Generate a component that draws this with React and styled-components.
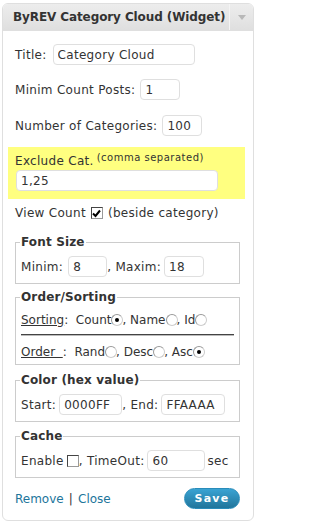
import React from "react";
import styled, { createGlobalStyle } from "styled-components";

const GlobalStyle = createGlobalStyle`
  body {
    margin: 0;
    background: #fff;
    font-family: "DejaVu Sans", Verdana, sans-serif;
    font-size: 12px;
    letter-spacing: 0.3px;
    color: #333;
  }
`;

const Widget = styled.div`
  box-sizing: border-box;
  width: 252px;
  margin: 3px 0 0 2px;
  border: 1px solid #dfdfdf;
  border-radius: 6px;
  overflow: hidden;
  background: #fff;
`;

const Header = styled.div`
  display: flex;
  height: 26px;
  border-bottom: 1px solid #dfdfdf;
  background: linear-gradient(to bottom, #ededed, #dfdfdf);
`;

const HeaderTitle = styled.h4`
  flex: 1;
  margin: 0;
  padding-left: 10px;
  font: bold 12px/26px "DejaVu Sans", Verdana, sans-serif;
  letter-spacing: -0.1px;
  color: #333;
  white-space: nowrap;
`;

const Toggle = styled.div`
  width: 23px;
  display: flex;
  align-items: center;
  justify-content: center;
  border-left: 1px solid #f4f4f4;
`;

const Body = styled.div`
  display: flex;
  flex-direction: column;
  padding: 13px 13px 11px 12px;
`;

const Row = styled.div`
  display: flex;
  align-items: center;
  height: ${(p) => p.$h || 21}px;
  margin-top: ${(p) => p.$mt || 0}px;
  letter-spacing: ${(p) => p.$ls ?? 0.3}px;
  white-space: pre;
`;

const TextInput = styled.input`
  box-sizing: border-box;
  width: ${(p) => p.$w}px;
  height: 21px;
  margin: 0 ${(p) => p.$mr ?? 0}px 0 ${(p) => p.$ml ?? 5}px;
  padding: 0 4px;
  border: 1px solid #dfdfdf;
  border-radius: 4px;
  background: #fff;
  font: 12px "DejaVu Sans", Verdana, sans-serif;
  letter-spacing: 0.3px;
  color: #333;
  outline: none;
`;

const Highlight = styled.div`
  margin: 11px -5px 0 -7px;
  padding: 6px 8px 8px 7px;
  background: #ffff80;
`;

const HighlightLabel = styled.div`
  height: 16px;
  margin-bottom: 1px;
  line-height: 16px;
  white-space: nowrap;
`;

const Note = styled.sup`
  margin-left: 3px;
  font-size: 10px;
  letter-spacing: 0.5px;
  vertical-align: 4px;
  line-height: 0;
`;

const Box = styled.span`
  box-sizing: border-box;
  display: inline-flex;
  align-items: center;
  justify-content: center;
  width: 12px;
  height: 12px;
  margin: 0 ${(p) => p.$mr ?? 1}px 0 ${(p) => p.$ml ?? 1}px;
  border: 1px solid #444;
  border-right-color: #999;
  border-bottom-color: #999;
  background: #fff;
`;

const Group = styled.fieldset`
  margin: ${(p) => p.$mt ?? 6}px 0 0;
  padding: 0 5px ${(p) => p.$pb ?? 6}px;
  border: 1px solid #ccc;
  min-inline-size: auto;
`;

const Legend = styled.legend`
  margin-left: -1px;
  padding: 0 1px;
  font: bold 12px/14px "DejaVu Sans", Verdana, sans-serif;
  letter-spacing: 0.15px;
  color: #333;
`;

const Under = styled.span`
  text-decoration: underline;
`;

const Radio = styled.span`
  box-sizing: border-box;
  display: inline-flex;
  align-items: center;
  justify-content: center;
  width: 12px;
  height: 12px;
  margin: 0 -1px 0 0;
  border-radius: 50%;
  border: 1px solid #999;
  border-right-color: #ccc;
  border-bottom-color: #ccc;
  background: #fff;

  &::after {
    content: "";
    display: ${(p) => (p.$checked ? "block" : "none")};
    width: 4px;
    height: 4px;
    border-radius: 50%;
    background: #000;
  }
`;

const Divider = styled.hr`
  margin: 4px 0 6px;
  height: 0;
  border: 0;
  border-top: 1px solid #444;
  border-bottom: 1px solid #bbb;
`;

const Footer = styled.div`
  display: flex;
  align-items: center;
  height: 21px;
  margin-top: 10px;
`;

const Link = styled.a`
  color: #21759b;
  letter-spacing: 0;
  text-decoration: none;
`;

const Pipe = styled.span`
  margin: 0 5px;
  color: #333;
`;

const SaveButton = styled.button`
  margin-left: auto;
  width: 56px;
  height: 21px;
  padding: 0;
  border: 1px solid #298cba;
  border-radius: 11px;
  background: linear-gradient(to bottom, #3aa3d3, #21759b);
  color: #fff;
  font: bold 11px "DejaVu Sans", Verdana, sans-serif;
  letter-spacing: 1.2px;
`;

const Arrow = () => (
  <svg width="8" height="5" viewBox="0 0 8 5">
    <path d="M0 0h8L4 5z" fill="#b8b8b8" />
  </svg>
);

const Check = () => (
  <svg width="9" height="9" viewBox="0 0 9 9">
    <path d="M1 4.5l2.5 2.5L8 1.5" stroke="#000" strokeWidth="2" fill="none" />
  </svg>
);

export default function App() {
  return (
    <>
      <GlobalStyle />
      <Widget>
        <Header>
          <HeaderTitle>ByREV Category Cloud (Widget)</HeaderTitle>
          <Toggle>
            <Arrow />
          </Toggle>
        </Header>
        <Body>
          <Row>
            Title:
            <TextInput $w={142} $ml={6} defaultValue="Category Cloud" />
          </Row>
          <Row $mt={14}>
            Minim Count Posts:
            <TextInput $w={40} defaultValue="1" />
          </Row>
          <Row $mt={15}>
            Number of Categories:
            <TextInput $w={40} defaultValue="100" />
          </Row>

          <Highlight>
            <HighlightLabel>
              Exclude Cat.<Note>(comma separated)</Note>
            </HighlightLabel>
            <TextInput $w={202} $ml={1} defaultValue="1,25" />
          </Highlight>

          <Row $h={16} $mt={6}>
            {"View Count"}
            <Box $ml={5} $mr={5}>
              <Check />
            </Box>
            {"(beside category)"}
          </Row>

          <Group $mt={14}>
            <Legend>Font Size</Legend>
            <Row $mt={7}>
              Minim:
              <TextInput $w={39} defaultValue="8" />
              , Maxim:
              <TextInput $w={40} $ml={3} defaultValue="18" />
            </Row>
          </Group>

          <Group $pb={2}>
            <Legend>Order/Sorting</Legend>
            <Row $h={20} $mt={6} $ls={0}>
              <Under>Sorting</Under>:  Count<Radio $checked />, Name<Radio />, Id<Radio />
            </Row>
            <Divider />
            <Row $h={20} $ls={0}>
              <Under>Order  </Under>:  Rand<Radio />, Desc<Radio />, Asc<Radio $checked />
            </Row>
          </Group>

          <Group $mt={8}>
            <Legend>Color (hex value)</Legend>
            <Row $mt={7}>
              Start:
              <TextInput $w={63} $ml={3} defaultValue="0000FF" />
              , End:
              <TextInput $w={64} $ml={3} defaultValue="FFAAAA" />
            </Row>
          </Group>

          <Group $mt={7}>
            <Legend>Cache</Legend>
            <Row $mt={7}>
              {"Enable"}
              <Box $ml={3} $mr={0} />
              {", TimeOut:"}
              <TextInput $w={58} $ml={3} $mr={2} defaultValue="60" />
              {"sec"}
            </Row>
          </Group>

          <Footer>
            <Link href="#remove">Remove</Link>
            <Pipe>|</Pipe>
            <Link href="#close">Close</Link>
            <SaveButton type="button">Save</SaveButton>
          </Footer>
        </Body>
      </Widget>
    </>
  );
}
